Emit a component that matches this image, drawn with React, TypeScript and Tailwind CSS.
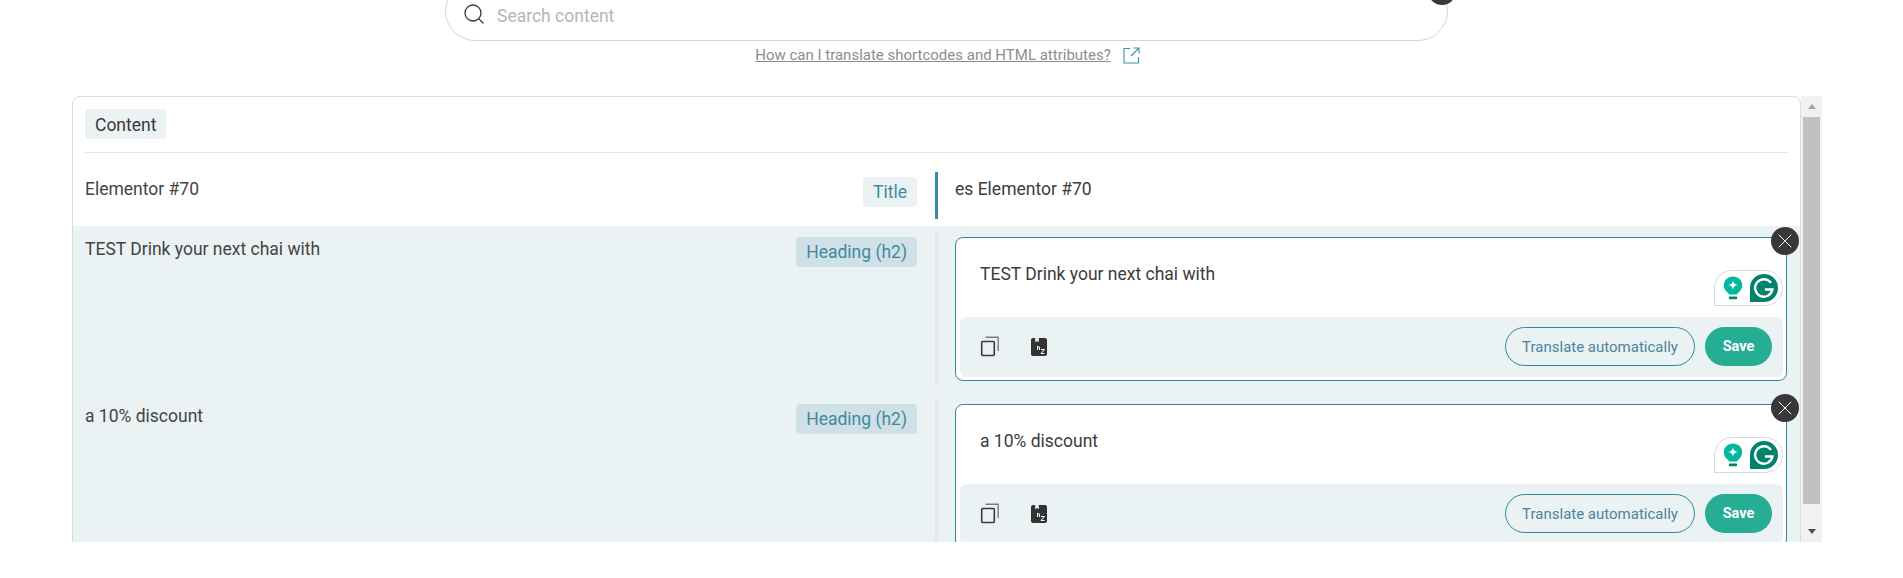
import React from "react";
import { Search, X } from "lucide-react";

const CopyIcon = () => (
  <svg width="20" height="21" viewBox="0 0 20 21" fill="none">
    <rect x="1.7" y="5.5" width="12.6" height="14" rx="1" stroke="#3a3a3a" strokeWidth="1.6" />
    <path d="M5.5 1.2H18.2V15" stroke="#7c7c7c" strokeWidth="1.4" />
  </svg>
);

const GlossaryIcon = () => (
  <svg width="16" height="18" viewBox="0 0 16 18">
    <path
      d="M2 0H4.2V4.2L6 3L7.8 4.2V0H14C15.1 0 16 .9 16 2V16C16 17.1 15.1 18 14 18H2C.9 18 0 17.1 0 16V2C0 .9 .9 0 2 0Z"
      fill="#333333"
    />
    <path d="M6.5 8V12M6.5 9H8.5V12M10 11.5H13.5L10 15.5H13.5" stroke="#ffffff" strokeWidth="1" fill="none" />
  </svg>
);

const GrammarlyBadge = () => (
  <div className="absolute right-[3px] top-[32px] flex h-[36px] w-[69px] items-center gap-[7px] rounded-t-[18px] rounded-br-[18px] border border-[#d5d9e5] bg-white pl-[8px]">
    <svg width="20" height="24" viewBox="0 0 20 24">
      <path
        d="M10 0.5C4.8 0.5 0.8 4.4 0.8 9.2C0.8 12.6 2.6 14.8 4.6 16.4C5.4 17 5.8 17.6 5.8 18.6H14.2C14.2 17.6 14.6 17 15.4 16.4C17.4 14.8 19.2 12.6 19.2 9.2C19.2 4.4 15.2 0.5 10 0.5Z"
        fill="#00b8a0"
      />
      <path d="M10 4.2C10.6 7.4 11.6 8.4 15 9C11.6 9.6 10.6 10.6 10 13.8C9.4 10.6 8.4 9.6 5 9C8.4 8.4 9.4 7.4 10 4.2Z" fill="#ffffff" />
      <rect x="5.8" y="20.6" width="8.4" height="2.6" rx="1.2" fill="#00826b" />
    </svg>
    <svg width="28" height="28" viewBox="0 0 27 27">
      <path d="M13.5 0A13.5 13.5 0 1 1 13.5 27H0V13.5A13.5 13.5 0 0 1 13.5 0Z" fill="#00826b" />
      <path
        d="M20.2 8.6A8.4 8.4 0 1 0 21.6 15H14.4"
        fill="none"
        stroke="#ffffff"
        strokeWidth="2.3"
      />
    </svg>
  </div>
);

const EditRow = ({ text }: { text: string }) => (
  <div className="flex h-[167px] shrink-0 bg-[#ebf2f4] pl-[12px]">
    <div className="flex w-[832px] shrink-0 items-start justify-between pt-[11px]">
      <p className="text-[17.5px] leading-6 text-[#444444]">{text}</p>
      <span className="rounded bg-[#cfe1e7] px-[10px] text-[17.5px] leading-[30px] text-[#42899f]">Heading (h2)</span>
    </div>
    <div className="ml-[18px] mt-[6px] h-[154px] w-[3px] shrink-0 bg-[#e4e8e9]" />
    <div className="relative ml-[17px] mt-[11px] h-[144px] w-[832px] shrink-0 rounded-lg border border-[#2f86a0] bg-white">
      <button className="absolute -right-[13px] -top-[11px] flex h-[28px] w-[28px] items-center justify-center rounded-full bg-[#383838] text-white">
        <X size={24} strokeWidth={1} />
      </button>
      <p className="pl-[24px] pt-[24px] text-[17.5px] leading-6 text-[#3c3c3c]">{text}</p>
      <GrammarlyBadge />
      <div className="absolute bottom-[3px] left-[4px] right-[3px] flex h-[60px] items-center rounded-md bg-[#ebf2f4] pl-[20px] pr-[11px]">
        <CopyIcon />
        <div className="ml-[31px]">
          <GlossaryIcon />
        </div>
        <button className="ml-auto h-[39px] w-[190px] rounded-full border border-[#2f86a0] pt-px text-[15px] text-[#4a84a0]">
          Translate automatically
        </button>
        <button className="ml-[10px] h-[39px] w-[67px] rounded-full bg-[#26ae94] pt-px text-[14.5px] font-bold text-white">Save</button>
      </div>
    </div>
  </div>
);

const ScrollBar = () => (
  <div className="flex w-[21px] shrink-0 flex-col items-center bg-[#f1f1f1]">
    <div className="flex h-[21px] items-center justify-center">
      <div className="h-0 w-0 border-x-[4.5px] border-b-[5px] border-x-transparent border-b-[#a3a3a3]" />
    </div>
    <div className="h-[387px] w-[17px] bg-[#c1c1c1]" />
    <div className="mt-auto flex h-[21px] items-center justify-center">
      <div className="h-0 w-0 border-x-[4.5px] border-t-[5px] border-x-transparent border-t-[#505050]" />
    </div>
  </div>
);

export default function App() {
  return (
    <div className="h-[578px] overflow-hidden bg-white font-['Roboto',sans-serif]">
      <div className="relative -mt-[19px] ml-[445px] flex h-[60px] w-[1003px] items-center rounded-[30px] border border-[#d6d6d6] pl-[16px]">
        <Search size={24} strokeWidth={1.3} className="mt-[6px] text-[#333333]" />
        <span className="ml-[11px] mt-[11px] text-[17.5px] text-[#b5b5b5]">Search content</span>
        <div className="absolute -top-[5px] right-[-9px] h-[28px] w-[28px] rounded-full bg-[#383838]" />
      </div>
      <div className="mt-[2px] flex h-[24px] items-center justify-center pr-[8px]">
        <a className="text-[15px] leading-5 text-[#8d8d8d] underline">How can I translate shortcodes and HTML attributes?</a>
        <svg className="ml-[12px]" width="17" height="17" viewBox="0 0 17 17" fill="none">
          <path d="M7 1.5H1V16H15.5V10" stroke="#3f8ea8" strokeWidth="1.1" />
          <path d="M8 9L15.5 1.5M10.5 1H16V6.5" stroke="#3f8ea8" strokeWidth="1.1" />
        </svg>
      </div>
      <div className="ml-[72px] mt-[29px] flex h-[446px] w-[1750px] overflow-hidden">
        <div className="h-[700px] w-[1729px] shrink-0 rounded-t-lg border border-[#d9dcdd] bg-white">
          <div className="mx-[12px] border-b border-[#e8e8e8] pb-[12.5px] pt-[12px]">
            <span className="inline-block h-[30px] rounded bg-[#ebf2f4] px-[10px] pt-px text-[17.5px] leading-[30px] text-[#383838]">Content</span>
          </div>
          <div className="flex h-[73px] pl-[12px]">
            <div className="flex w-[832px] shrink-0 items-start justify-between pt-[24px]">
              <p className="text-[17.5px] leading-6 text-[#444444]">Elementor #70</p>
              <span className="rounded bg-[#ebf2f4] px-[10px] text-[17.5px] leading-[30px] text-[#42899f]">Title</span>
            </div>
            <div className="ml-[18px] mt-[19px] h-[47px] w-[3px] shrink-0 bg-[#3c8aa5]" />
            <p className="ml-[17px] pt-[24px] text-[17.5px] leading-6 text-[#3c3c3c]">es Elementor #70</p>
          </div>
          <EditRow text="TEST Drink your next chai with" />
          <EditRow text="a 10% discount" />
        </div>
        <ScrollBar />
      </div>
    </div>
  );
}
